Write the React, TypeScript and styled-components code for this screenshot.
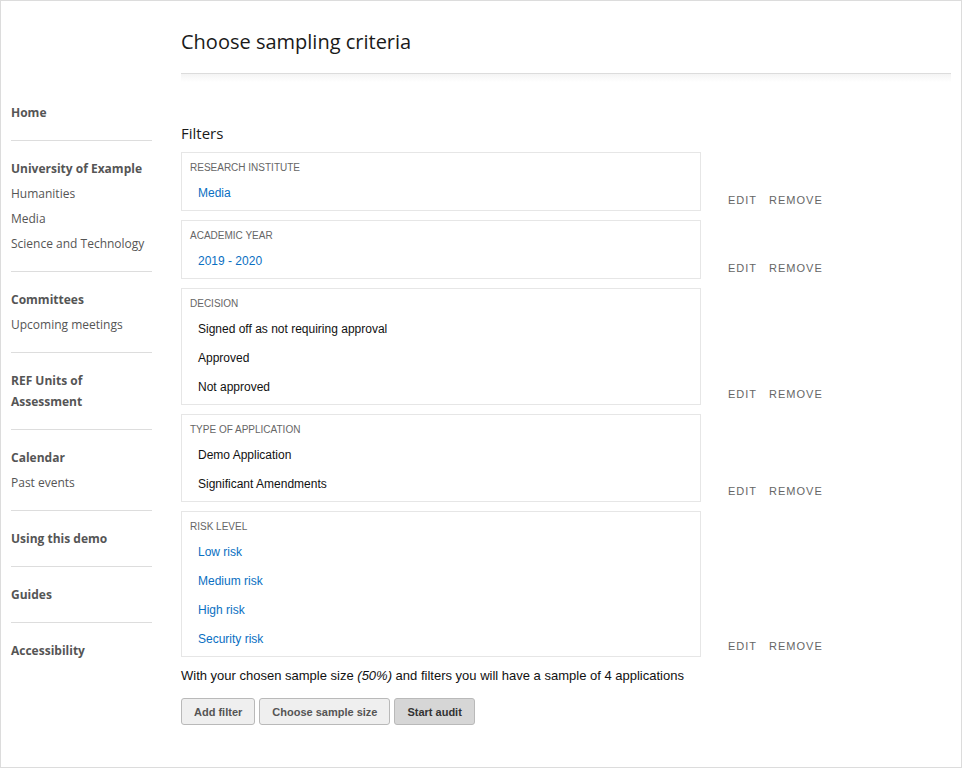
import styled, { createGlobalStyle } from "styled-components";

type Filter = {
  label: string;
  values: string[];
  link?: boolean;
};

const filters: Filter[] = [
  { label: "Research institute", values: ["Media"], link: true },
  { label: "Academic year", values: ["2019 - 2020"], link: true },
  {
    label: "Decision",
    values: ["Signed off as not requiring approval", "Approved", "Not approved"],
  },
  { label: "Type of application", values: ["Demo Application", "Significant Amendments"] },
  {
    label: "Risk level",
    values: ["Low risk", "Medium risk", "High risk", "Security risk"],
    link: true,
  },
];

const navSections = [
  { title: ["Home"], items: [] },
  { title: ["University of Example"], items: ["Humanities", "Media", "Science and Technology"] },
  { title: ["Committees"], items: ["Upcoming meetings"] },
  { title: ["REF Units of", "Assessment"], items: [] },
  { title: ["Calendar"], items: ["Past events"] },
  { title: ["Using this demo"], items: [] },
  { title: ["Guides"], items: [] },
  { title: ["Accessibility"], items: [] },
];

const App = () => {
  return (
    <>
      <GlobalStyle />
      <Frame>
        <Sidebar>
          {navSections.map((section, i) => (
            <NavSection key={i} last={i === navSections.length - 1}>
              <NavTitle>
                {section.title.map((line) => (
                  <div key={line}>{line}</div>
                ))}
              </NavTitle>
              {section.items.map((item) => (
                <NavItem key={item}>{item}</NavItem>
              ))}
            </NavSection>
          ))}
        </Sidebar>
        <Main>
          <Header>
            <Title>Choose sampling criteria</Title>
          </Header>
          <HeaderShadow />
          <SectionTitle>Filters</SectionTitle>
          <FilterList>
            {filters.map((filter) => (
              <FilterRow key={filter.label}>
                <FilterCard>
                  <FilterLabel>{filter.label}</FilterLabel>
                  <ValueList>
                    {filter.values.map((value) => (
                      <FilterValue key={value} link={filter.link}>
                        {value}
                      </FilterValue>
                    ))}
                  </ValueList>
                </FilterCard>
                <Actions>
                  <ActionLink>Edit</ActionLink>
                  <ActionLink>Remove</ActionLink>
                </Actions>
              </FilterRow>
            ))}
          </FilterList>
          <Summary>
            With your chosen sample size <em>(50%)</em> and filters you will have a sample of 4
            applications
          </Summary>
          <ButtonRow>
            <Button>Add filter</Button>
            <Button>Choose sample size</Button>
            <Button primary>Start audit</Button>
          </ButtonRow>
        </Main>
      </Frame>
    </>
  );
};

const GlobalStyle = createGlobalStyle`
  html, body {
    margin: 0;
    padding: 0;
    background: #ffffff;
  }
  * {
    box-sizing: border-box;
  }
`;

const Frame = styled.div`
  display: flex;
  width: 962px;
  height: 768px;
  border: 1px solid #dcdcdc;
  overflow: hidden;
`;

const Sidebar = styled.nav`
  width: 180px;
  flex-shrink: 0;
  padding: 84px 29px 0 10px;
  font-family: "Open Sans", "Noto Sans", sans-serif;
  font-size: 12px;
  color: #555555;
`;

const NavSection = styled.div<{ last?: boolean }>`
  padding: 17px 0 17px;
  border-bottom: ${(p) => (p.last ? "none" : "1px solid #dddddd")};
`;

const NavTitle = styled.div`
  font-weight: 700;
  line-height: 21px;
`;

const NavItem = styled.div`
  margin-top: 4px;
  line-height: 21px;
`;

const Main = styled.main`
  flex: 1;
  padding-right: 10px;
  font-family: "Liberation Sans", Arial, sans-serif;
`;

const Header = styled.header`
  padding: 27px 0 17px;
  border-bottom: 1px solid #dcdcdc;
`;

const Title = styled.h1`
  margin: 0;
  font-family: "Open Sans", "Noto Sans", sans-serif;
  font-size: 20px;
  font-weight: 400;
  line-height: 28px;
  color: #1a1a1a;
`;

const HeaderShadow = styled.div`
  height: 8px;
  background: linear-gradient(#f4f4f4, #ffffff);
`;

const SectionTitle = styled.h2`
  margin: 41px 0 9px;
  font-family: "Open Sans", "Noto Sans", sans-serif;
  font-size: 15px;
  font-weight: 400;
  line-height: 20px;
  color: #1a1a1a;
`;

const FilterList = styled.div`
  display: flex;
  flex-direction: column;
  gap: 9px;
`;

const FilterRow = styled.div`
  display: flex;
  align-items: flex-end;
`;

const FilterCard = styled.div`
  width: 520px;
  border: 1px solid #e6e6e6;
  padding: 8px 8px 2px;
`;

const FilterLabel = styled.div`
  font-size: 10px;
  line-height: 14px;
  text-transform: uppercase;
  color: #666666;
`;

const ValueList = styled.div`
  margin-top: 4px;
  padding-left: 8px;
`;

const FilterValue = styled.div<{ link?: boolean }>`
  font-size: 12px;
  line-height: 29px;
  color: ${(p) => (p.link ? "#0a6fc2" : "#111111")};
`;

const Actions = styled.div`
  display: flex;
  gap: 12px;
  margin-left: 27px;
  padding-bottom: 4px;
`;

const ActionLink = styled.span`
  font-size: 11px;
  line-height: 14px;
  letter-spacing: 1px;
  text-transform: uppercase;
  color: #666666;
`;

const Summary = styled.p`
  margin: 11px 0 0;
  font-size: 13px;
  line-height: 16px;
  color: #111111;
`;

const ButtonRow = styled.div`
  display: flex;
  gap: 4px;
  margin-top: 14px;
`;

const Button = styled.button<{ primary?: boolean }>`
  height: 27px;
  padding: 0 12px;
  border: 1px solid #b9b9b9;
  border-radius: 3px;
  background: ${(p) => (p.primary ? "#d6d6d6" : "#efefef")};
  font-family: "Liberation Sans", Arial, sans-serif;
  font-size: 11px;
  font-weight: 700;
  color: ${(p) => (p.primary ? "#333333" : "#555555")};
`;

export default App;
